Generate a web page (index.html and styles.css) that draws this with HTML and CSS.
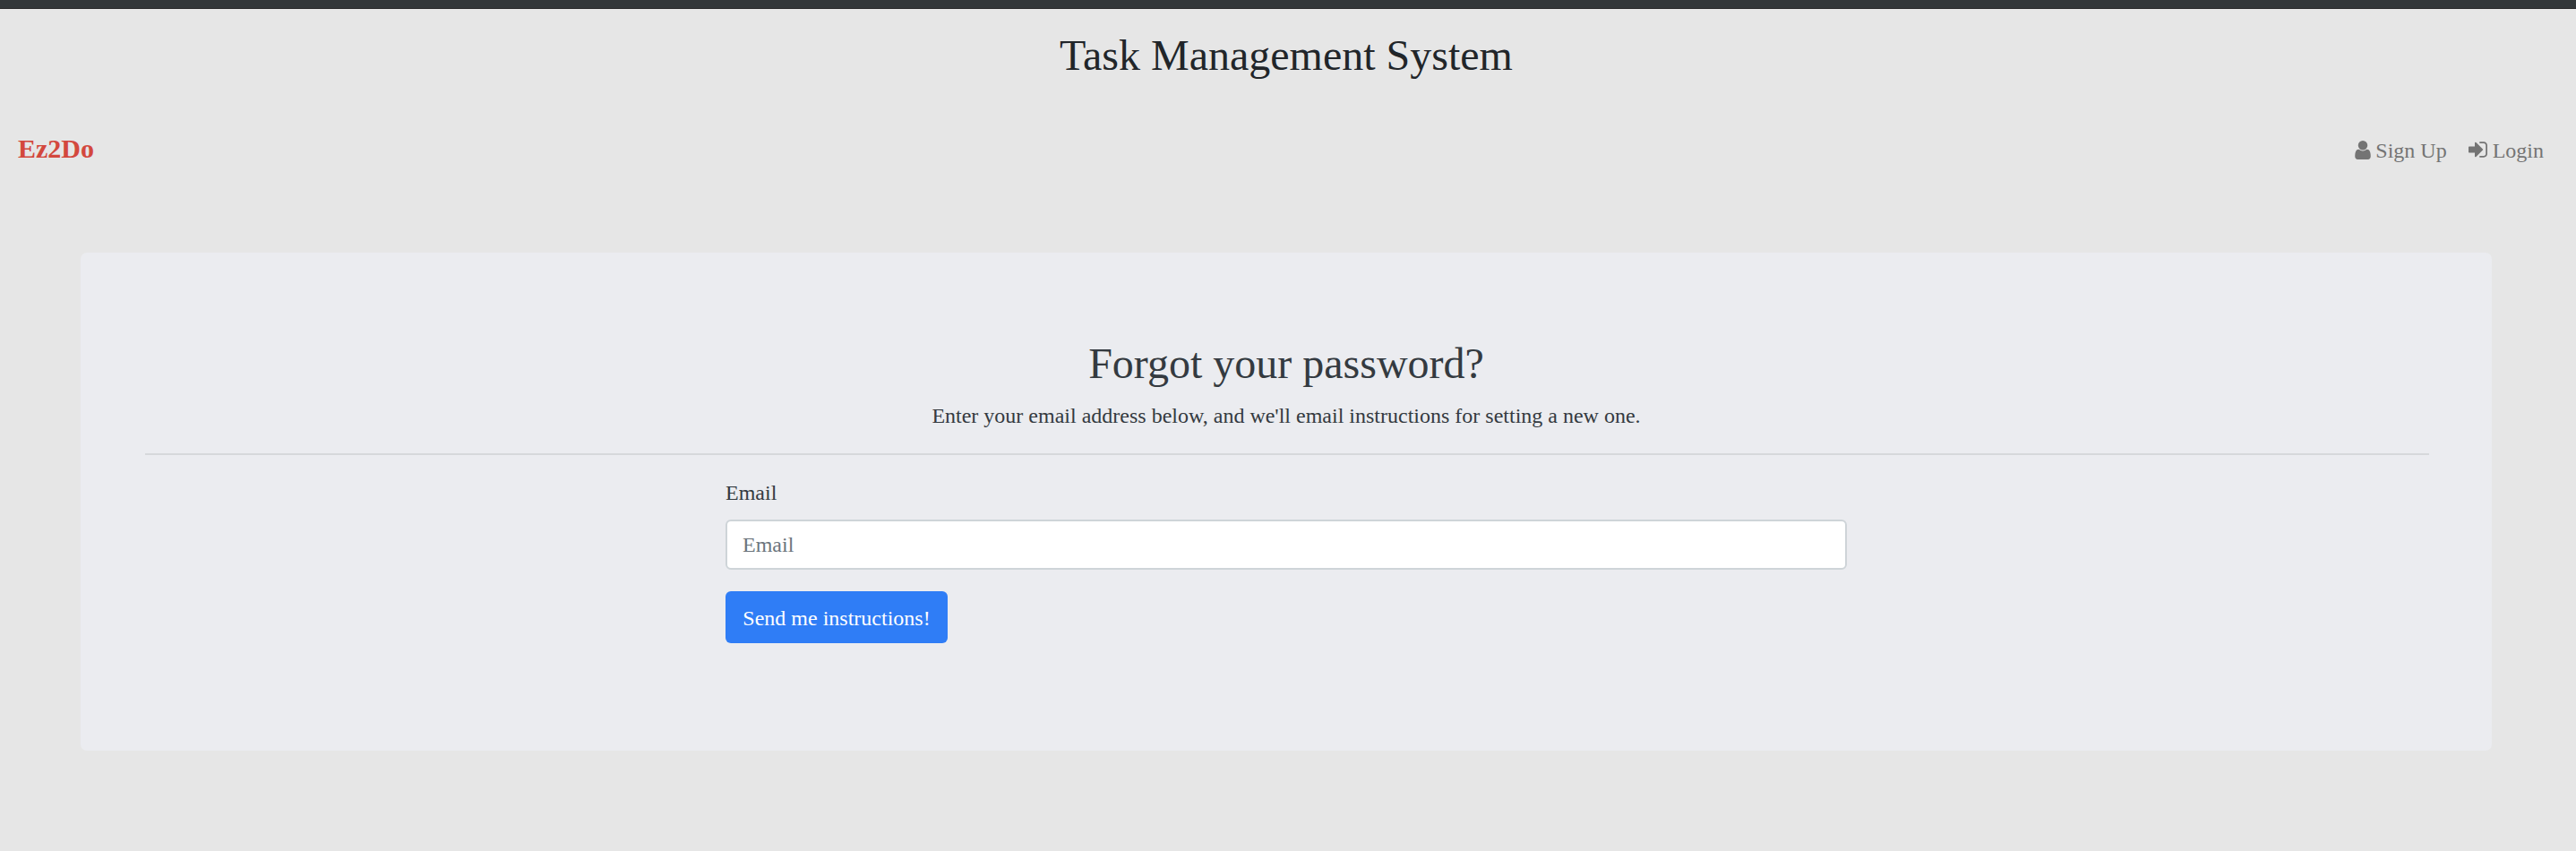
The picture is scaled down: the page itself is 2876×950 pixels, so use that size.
FILE: index.html
```html
<!DOCTYPE html>
<html lang="en">
<head>
<meta charset="utf-8">
<title>Task Management System</title>
<link rel="stylesheet" href="styles.css">
</head>
<body>
<div class="topbar"></div>
<header><h1 class="site-title">Task Management System</h1></header>
<nav class="navbar">
  <a class="brand">Ez2Do</a>
  <div class="links">
    <a class="link link-signup"><svg class="icon-user" viewBox="0 0 1280 1536"><path d="M1280 1271q0 109-62.500 187t-150.500 78h-854q-88 0-150.500-78t-62.500-187q0-85 8.500-160.500t31.500-152 58.500-131 94-89 134.500-34.500q131 128 313 128t313-128q76 0 134.500 34.500t94 89 58.500 131 31.500 152 8.500 160.500zM1024 384q0 159-112.500 271.500t-271.500 112.500-271.500-112.500-112.500-271.500 112.500-271.500 271.500-112.500 271.500 112.500 112.500 271.500z"/></svg><span>Sign Up</span></a>
    <a class="link"><svg class="icon-login" viewBox="0 0 1536 1280"><path d="M1184 640q0 26-19 45l-544 544q-19 19-45 19t-45-19-19-45v-288h-448q-26 0-45-19t-19-45v-384q0-26 19-45t45-19h448v-288q0-26 19-45t45-19 45 19l544 544q19 19 19 45zM1536 288v704q0 119-84.500 203.500t-203.500 84.500h-320q-13 0-22.500-9.500t-9.500-22.500q0-4-1-20t-.5-26.500 3-23.500 10-19.500 20.500-6.500h320q66 0 113-47t47-113v-704q0-66-47-113t-113-47h-312l-11.500-1-11.500-3-8-5.500-7-9-2-13.500q0-4-1-20t-.5-26.500 3-23.500 10-19.500 20.500-6.500h320q119 0 203.500 84.500t84.500 203.500z"/></svg><span>Login</span></a>
  </div>
</nav>
<main class="card">
  <h1 class="heading">Forgot your password?</h1>
  <p class="lead">Enter your email address below, and we'll email instructions for setting a new one.</p>
  <hr class="rule">
  <form class="form">
    <label class="label" for="email">Email</label>
    <input class="input" id="email" type="email" placeholder="Email">
    <button class="button" type="button">Send me instructions!</button>
  </form>
</main>
</body>
</html>
```
FILE: styles.css
```css
* { box-sizing: border-box; }
body {
  margin: 0;
  height: 950px;
  overflow: hidden;
  background: #e6e6e6;
  color: #343a40;
  font: 24px/36px "Liberation Serif", "Times New Roman", serif;
}
.topbar { height: 10px; background: #333739; border-bottom: 1px solid #29292a; }
.site-title {
  margin: 23px 4px 0 0;
  font-size: 48px;
  line-height: 58px;
  font-weight: 400;
  text-align: center;
  color: #212529;
}
.navbar {
  display: flex;
  justify-content: space-between;
  align-items: center;
  height: 60px;
  margin-top: 46px;
  padding: 0 36px 0 20px;
}
.brand { padding-bottom: 2px; font-size: 30px; font-weight: 700; color: #d3483e; }
.links { display: flex; gap: 24px; color: #747474; }
.link { display: flex; align-items: center; gap: 6px; }
.link-signup { gap: 5px; }
.link span { padding-top: 1px; }
.link svg { fill: currentColor; }
.icon-user { width: 18px; height: 21px; }
.icon-login { width: 21px; height: 18px; }
.card {
  width: 2692px;
  height: 556px;
  margin: 85px 0 0 90px;
  padding: 95px 72px 0;
  border-radius: 7px;
  background: #ebecf0;
}
.heading { margin: 0; font-size: 48px; line-height: 58px; font-weight: 400; text-align: center; }
.lead { margin: 11px 0 0; text-align: center; }
.rule { margin: 24px -2px 0 0; height: 2px; border: 0; background: #d6d8db; }
.form { width: 1252px; margin: 24px auto 0; display: flex; flex-direction: column; align-items: flex-start; }
.label { margin-bottom: 12px; }
.input {
  width: 100%;
  height: 56px;
  padding: 0 17px;
  border: 2px solid #ced4d8;
  border-radius: 6px;
  background: #fff;
  font: inherit;
}
.input::placeholder { color: #6c757d; opacity: 1; }
.button {
  width: 248px;
  height: 58px;
  margin-top: 24px;
  padding: 1px 0 0;
  border: 0;
  border-radius: 6px;
  background: #2f7df6;
  color: #fff;
  font: inherit;
}
```
